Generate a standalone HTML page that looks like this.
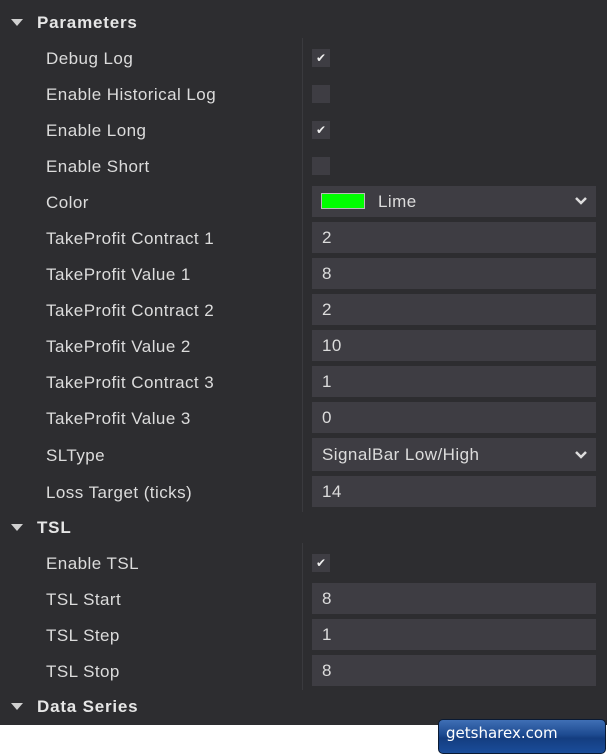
<!DOCTYPE html>
<html><head><style>
body{margin:0;width:607px;height:756px;background:#fff;position:relative;overflow:hidden;font-family:"Liberation Sans",Arial,sans-serif}
#p{position:absolute;left:0;top:0;width:607px;height:725px;background:#2d2d30}
.l{position:absolute;left:46px;color:#dcdcdc;font-size:17px;line-height:20px;margin-top:1px;letter-spacing:0.45px}
.h{position:absolute;left:37px;color:#e6e6e6;font-size:17px;font-weight:bold;line-height:20px;margin-top:1px;letter-spacing:0.8px}
.t{position:absolute;left:11px;width:0;height:0;border-left:6px solid transparent;border-right:6px solid transparent;border-top:7px solid #d0d0d0}
.f{position:absolute;left:312px;width:284px;height:31px;background:#3e3d43;color:#dcdcdc;font-size:17px;line-height:32px;box-sizing:border-box;padding-left:10px;letter-spacing:0.45px}
.c{position:absolute;left:312px;width:18px;height:18px;background:#3e3d43;color:#eee;font-size:12px;line-height:18px;text-align:center}
.d{position:absolute;left:302px;width:1px;background:#3a3a3e}
.ar{position:absolute;right:8px;top:9px}
</style></head><body><div id="p">
<div class="t" style="top:19px"></div><div class="h" style="top:12px">Parameters</div>
<div class="d" style="top:38px;height:474px"></div>
<div class="l" style="top:48px">Debug Log</div><div class="c" style="top:49px">✔</div>
<div class="l" style="top:84px">Enable Historical Log</div><div class="c" style="top:85px"></div>
<div class="l" style="top:120px">Enable Long</div><div class="c" style="top:121px">✔</div>
<div class="l" style="top:156px">Enable Short</div><div class="c" style="top:157px"></div>
<div class="l" style="top:192px">Color</div><div class="f" style="top:186px;padding-left:66px">Lime<span style="position:absolute;left:9px;top:7px;width:42px;height:14px;background:#00ff00;border:1px solid #bbb"></span><svg class="ar" width="14" height="12" viewBox="0 0 14 12"><path d="M2 3l5 5 5-5" stroke="#ddd" stroke-width="2.5" fill="none"/></svg></div>
<div class="l" style="top:228px">TakeProfit Contract 1</div><div class="f" style="top:222px">2</div>
<div class="l" style="top:264px">TakeProfit Value 1</div><div class="f" style="top:258px">8</div>
<div class="l" style="top:300px">TakeProfit Contract 2</div><div class="f" style="top:294px">2</div>
<div class="l" style="top:336px">TakeProfit Value 2</div><div class="f" style="top:330px">10</div>
<div class="l" style="top:372px">TakeProfit Contract 3</div><div class="f" style="top:366px">1</div>
<div class="l" style="top:408px">TakeProfit Value 3</div><div class="f" style="top:402px">0</div>
<div class="l" style="top:445px">SLType</div><div class="f" style="top:438px;height:33px;line-height:34px">SignalBar Low/High<svg class="ar" width="14" height="12" viewBox="0 0 14 12" style="top:11px"><path d="M2 3l5 5 5-5" stroke="#ddd" stroke-width="2.5" fill="none"/></svg></div>
<div class="l" style="top:482px">Loss Target (ticks)</div><div class="f" style="top:476px">14</div>
<div class="t" style="top:524px"></div><div class="h" style="top:517px">TSL</div>
<div class="d" style="top:543px;height:147px"></div>
<div class="l" style="top:553px">Enable TSL</div><div class="c" style="top:554px">✔</div>
<div class="l" style="top:589px">TSL Start</div><div class="f" style="top:583px">8</div>
<div class="l" style="top:625px">TSL Step</div><div class="f" style="top:619px">1</div>
<div class="l" style="top:661px">TSL Stop</div><div class="f" style="top:655px">8</div>
<div class="t" style="top:703px"></div><div class="h" style="top:696px">Data Series</div>
</div>
<div style="position:absolute;left:438px;top:719px;width:168px;height:35px;border:1px solid #0a1a33;border-radius:5px;box-sizing:border-box;background:linear-gradient(#3f6fb5,#1d4a90 45%,#143d80 55%,#1a4d9a);color:#fff;font-size:15px;line-height:26px;padding-left:7px;font-family:'DejaVu Sans',sans-serif">getsharex.com</div>
</body></html>
